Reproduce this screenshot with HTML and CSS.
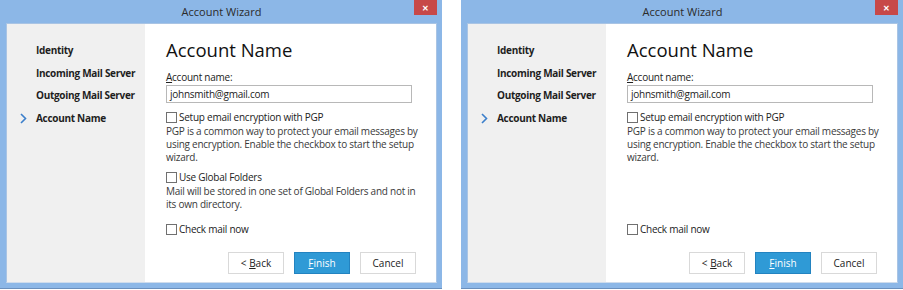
FILE: index.html
```html
<!DOCTYPE html>
<html>
<head>
  <title>Account Wizard</title>
  <meta name="viewport" content="width=device-width, initial-scale=1">
  <link rel="stylesheet" href="styles.css">
</head>
<body>
  <div class="screen">
    <div class="window">
      <div class="titlebar">
        <span class="title">Account Wizard</span>
        <span class="close">&#x2715;</span>
      </div>
      <div class="frame">
        <div class="steps">
          <div class="step">Identity</div>
          <div class="step">Incoming Mail Server</div>
          <div class="step">Outgoing Mail Server</div>
          <div class="step current">
            <svg class="chevron" width="7" height="11" viewBox="0 0 7 11"><polyline points="1,1 5.5,5.5 1,10" fill="none" stroke="#3b7fcb" stroke-width="1.6"/></svg>
            Account Name
          </div>
        </div>
        <div class="page">
          <h1>Account Name</h1>
          <div class="label"><u>A</u>ccount name:</div>
          <div class="input">johnsmith@gmail.com</div>
          <div class="check"><span class="box"></span>Setup email encryption with PGP</div>
          <p class="desc">PGP is a common way to protect your email messages by<br>using encryption. Enable the checkbox to start the setup<br>wizard.</p>
          <div class="check"><span class="box"></span>Use Global Folders</div>
          <p class="desc">Mail will be stored in one set of Global Folders and not in<br>its own directory.</p>
          <div class="footer">
            <div class="check"><span class="box"></span>Check mail now</div>
            <div class="buttons">
              <span class="button">&lt; <u>B</u>ack</span>
              <span class="button primary"><u>F</u>inish</span>
              <span class="button">Cancel</span>
            </div>
          </div>
        </div>
      </div>
    </div>

    <div class="window">
      <div class="titlebar">
        <span class="title">Account Wizard</span>
        <span class="close">&#x2715;</span>
      </div>
      <div class="frame">
        <div class="steps">
          <div class="step">Identity</div>
          <div class="step">Incoming Mail Server</div>
          <div class="step">Outgoing Mail Server</div>
          <div class="step current">
            <svg class="chevron" width="7" height="11" viewBox="0 0 7 11"><polyline points="1,1 5.5,5.5 1,10" fill="none" stroke="#3b7fcb" stroke-width="1.6"/></svg>
            Account Name
          </div>
        </div>
        <div class="page">
          <h1>Account Name</h1>
          <div class="label"><u>A</u>ccount name:</div>
          <div class="input">johnsmith@gmail.com</div>
          <div class="check"><span class="box"></span>Setup email encryption with PGP</div>
          <p class="desc">PGP is a common way to protect your email messages by<br>using encryption. Enable the checkbox to start the setup<br>wizard.</p>
          <div class="footer">
            <div class="check"><span class="box"></span>Check mail now</div>
            <div class="buttons">
              <span class="button">&lt; <u>B</u>ack</span>
              <span class="button primary"><u>F</u>inish</span>
              <span class="button">Cancel</span>
            </div>
          </div>
        </div>
      </div>
    </div>
  </div>
</body>
</html>
```

FILE: styles.css
```css
html {
  font-family: "Open Sans", "Noto Sans", Arial, sans-serif;
  font-size: 10px;
  color: #222;
}
body {
  margin: 0;
  background: #fff;
}
.screen {
  display: flex;
  gap: 19px;
  width: 903px;
  height: 290px;
}
.window {
  width: 442px;
  height: 289px;
  flex-shrink: 0;
  background-color: #8cb7e7;
  border-bottom: 1px solid #6a8fbd;
  box-sizing: border-box;
  display: flex;
  flex-direction: column;
  padding: 0 5px 5px 6px;
}
.titlebar {
  height: 23px;
  display: flex;
  align-items: flex-start;
}
.title {
  flex: 1;
  text-align: center;
  padding-left: 23px;
  line-height: 23px;
  font-size: 11px;
  color: #2b2b2b;
}
.close {
  width: 23px;
  height: 15px;
  background-color: #c74848;
  color: #fff;
  font-size: 8px;
  font-weight: bold;
  text-align: center;
  line-height: 15px;
}
.frame {
  flex: 1;
  min-height: 0;
  display: flex;
  background: #fff;
  border: 1px solid #a9c4e4;
  border-bottom-color: #cfdcec;
  overflow: hidden;
}
.steps {
  width: 138px;
  flex-shrink: 0;
  background-color: #f0f0f0;
  padding-top: 15px;
  box-sizing: border-box;
}
.step {
  position: relative;
  height: 22.5px;
  line-height: 22.5px;
  padding-left: 29px;
  font-weight: bold;
  letter-spacing: -0.3px;
  white-space: nowrap;
  color: #1e1e1e;
}
.chevron {
  position: absolute;
  left: 13px;
  top: 6px;
}
.page {
  flex: 1;
  min-width: 0;
  display: flex;
  flex-direction: column;
  padding: 12px 20px 8px 21px;
  white-space: nowrap;
  letter-spacing: -0.25px;
}
h1 {
  margin: 0 0 6px;
  font-size: 18.5px;
  font-weight: normal;
  line-height: 28px;
  letter-spacing: 0;
  color: #111;
}
.label {
  line-height: 14px;
}
.input {
  margin-top: 1px;
  height: 18px;
  width: 246px;
  box-sizing: border-box;
  border: 1px solid #b8b8b8;
  padding-left: 3px;
  line-height: 16px;
  color: #222;
}
.check {
  display: flex;
  align-items: center;
  margin-top: 7px;
  line-height: 14px;
  color: #222;
}
.desc + .check {
  margin-top: 6px;
}
.box {
  width: 9px;
  height: 9px;
  border: 1px solid #707070;
  background: #fff;
  margin-right: 2px;
}
.desc {
  margin: 1px 0 0;
  line-height: 13px;
  color: #3a3a3a;
}
.footer {
  margin-top: auto;
}
.buttons {
  display: flex;
  justify-content: flex-end;
  gap: 10px;
  margin-top: 16px;
}
.button {
  width: 56px;
  height: 22px;
  box-sizing: border-box;
  border: 1px solid #d9d9d9;
  background: #fff;
  text-align: center;
  line-height: 20px;
  letter-spacing: 0;
  color: #222;
}
.button.primary {
  background-color: #2f9ad6;
  border-color: #2383c0;
  color: #fff;
}
```
